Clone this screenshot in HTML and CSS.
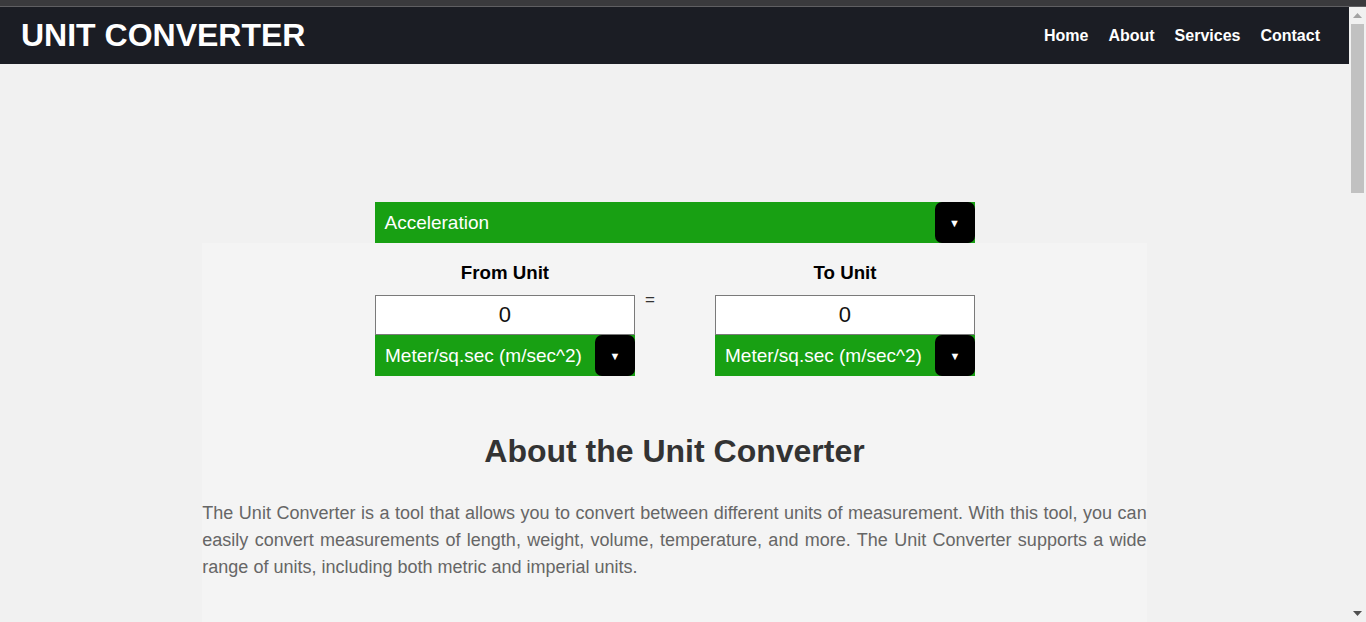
FILE: index.html
```html
<!DOCTYPE html>
<html lang="en">
<head>
<meta charset="utf-8">
<title>Unit Converter</title>
<link rel="stylesheet" href="styles.css">
</head>
<body>
<div class="chrome-bar"></div>
<div class="viewport">
  <div class="page">
    <header class="navbar">
      <div class="brand">UNIT CONVERTER</div>
      <nav class="nav-links">
        <a href="#">Home</a>
        <a href="#">About</a>
        <a href="#">Services</a>
        <a href="#">Contact</a>
      </nav>
    </header>

    <div class="category-row">
      <div class="select">
        <span class="select-text">Acceleration</span>
        <span class="select-arrow">&#9660;</span>
      </div>
    </div>

    <main class="card">
      <div class="converter">
        <div class="unit-col">
          <div class="unit-label">From Unit</div>
          <div class="unit-input">0</div>
          <div class="select">
            <span class="select-text">Meter/sq.sec (m/sec^2)</span>
            <span class="select-arrow">&#9660;</span>
          </div>
        </div>
        <div class="equals">=</div>
        <div class="unit-col">
          <div class="unit-label">To Unit</div>
          <div class="unit-input">0</div>
          <div class="select">
            <span class="select-text">Meter/sq.sec (m/sec^2)</span>
            <span class="select-arrow">&#9660;</span>
          </div>
        </div>
      </div>

      <section class="about">
        <h2 class="about-title">About the Unit Converter</h2>
        <p class="about-text">The Unit Converter is a tool that allows you to convert between different units of measurement. With this tool, you can easily convert measurements of length, weight, volume, temperature, and more. The Unit Converter supports a wide range of units, including both metric and imperial units.</p>
      </section>
    </main>
  </div>

  <div class="scrollbar">
    <div class="sb-button">
      <svg width="9" height="5" viewBox="0 0 9 5"><polygon points="0,5 9,5 4.5,0" fill="#a3a3a3"/></svg>
    </div>
    <div class="sb-track">
      <div class="sb-thumb"></div>
    </div>
    <div class="sb-button">
      <svg width="9" height="5" viewBox="0 0 9 5"><polygon points="0,0 9,0 4.5,5" fill="#505050"/></svg>
    </div>
  </div>
</div>
</body>
</html>
```

FILE: styles.css
```css
html, body {
  margin: 0;
  padding: 0;
  height: 100%;
  overflow: hidden;
}

body {
  font-family: "Liberation Sans", Arial, sans-serif;
  background: #f1f1f1;
}

.chrome-bar {
  height: 6px;
  background: #3a3a3d;
  border-bottom: 1px solid #5f5f62;
}

.viewport {
  height: calc(100vh - 7px);
  display: flex;
  background: #f1f1f1;
}

.page {
  flex: 1;
  overflow: hidden;
}

.scrollbar {
  width: 17px;
  flex: none;
  display: flex;
  flex-direction: column;
  background: #f1f1f1;
}

.sb-button {
  height: 17px;
  display: flex;
  align-items: center;
  justify-content: center;
}

.sb-track {
  flex: 1;
  padding: 0 2px;
}

.sb-thumb {
  height: 169px;
  background: #c1c1c1;
}

.navbar {
  height: 57px;
  background: #1b1d24;
  display: flex;
  align-items: center;
  justify-content: space-between;
  padding: 0 29px 0 21px;
}

.brand {
  color: #ffffff;
  font-weight: bold;
  font-size: 32px;
}

.nav-links {
  display: flex;
  gap: 20px;
}

.nav-links a {
  color: #ffffff;
  font-weight: bold;
  font-size: 16px;
  text-decoration: none;
}

.category-row {
  width: 600px;
  margin: 138px auto 0;
}

.select {
  height: 41px;
  background: #18a013;
  display: flex;
  align-items: center;
  justify-content: space-between;
  color: #ffffff;
  font-size: 19px;
}

.select-text {
  padding-left: 10px;
}

.select-arrow {
  width: 40px;
  height: 41px;
  background: #000000;
  border-radius: 7px;
  display: flex;
  align-items: center;
  justify-content: center;
  font-size: 11px;
  color: #ffffff;
}

.card {
  width: 70%;
  margin: 0 auto;
  background: #f4f4f4;
  padding-bottom: 400px;
}

.converter {
  display: flex;
  justify-content: center;
  padding-left: 1px;
}

.unit-col {
  width: 260px;
}

.unit-label {
  text-align: center;
  font-weight: bold;
  font-size: 18.7px;
  line-height: 22px;
  color: #000000;
  margin: 19px 0 11px;
}

.unit-input {
  height: 38px;
  background: #ffffff;
  border: 1px solid #7a7a7a;
  text-align: center;
  font-size: 22px;
  line-height: 38px;
  color: #111111;
}

.equals {
  width: 80px;
  box-sizing: border-box;
  padding-left: 10px;
  margin-top: 47px;
  line-height: 20px;
  font-size: 17px;
  color: #333333;
}

.about {
  padding-top: 57px;
}

.about-title {
  margin: 0;
  text-align: center;
  font-size: 32px;
  line-height: 37px;
  font-weight: bold;
  color: #333333;
}

.about-text {
  margin: 30px 0 0;
  font-size: 18px;
  line-height: 27px;
  color: #666666;
  text-align: justify;
}
```
